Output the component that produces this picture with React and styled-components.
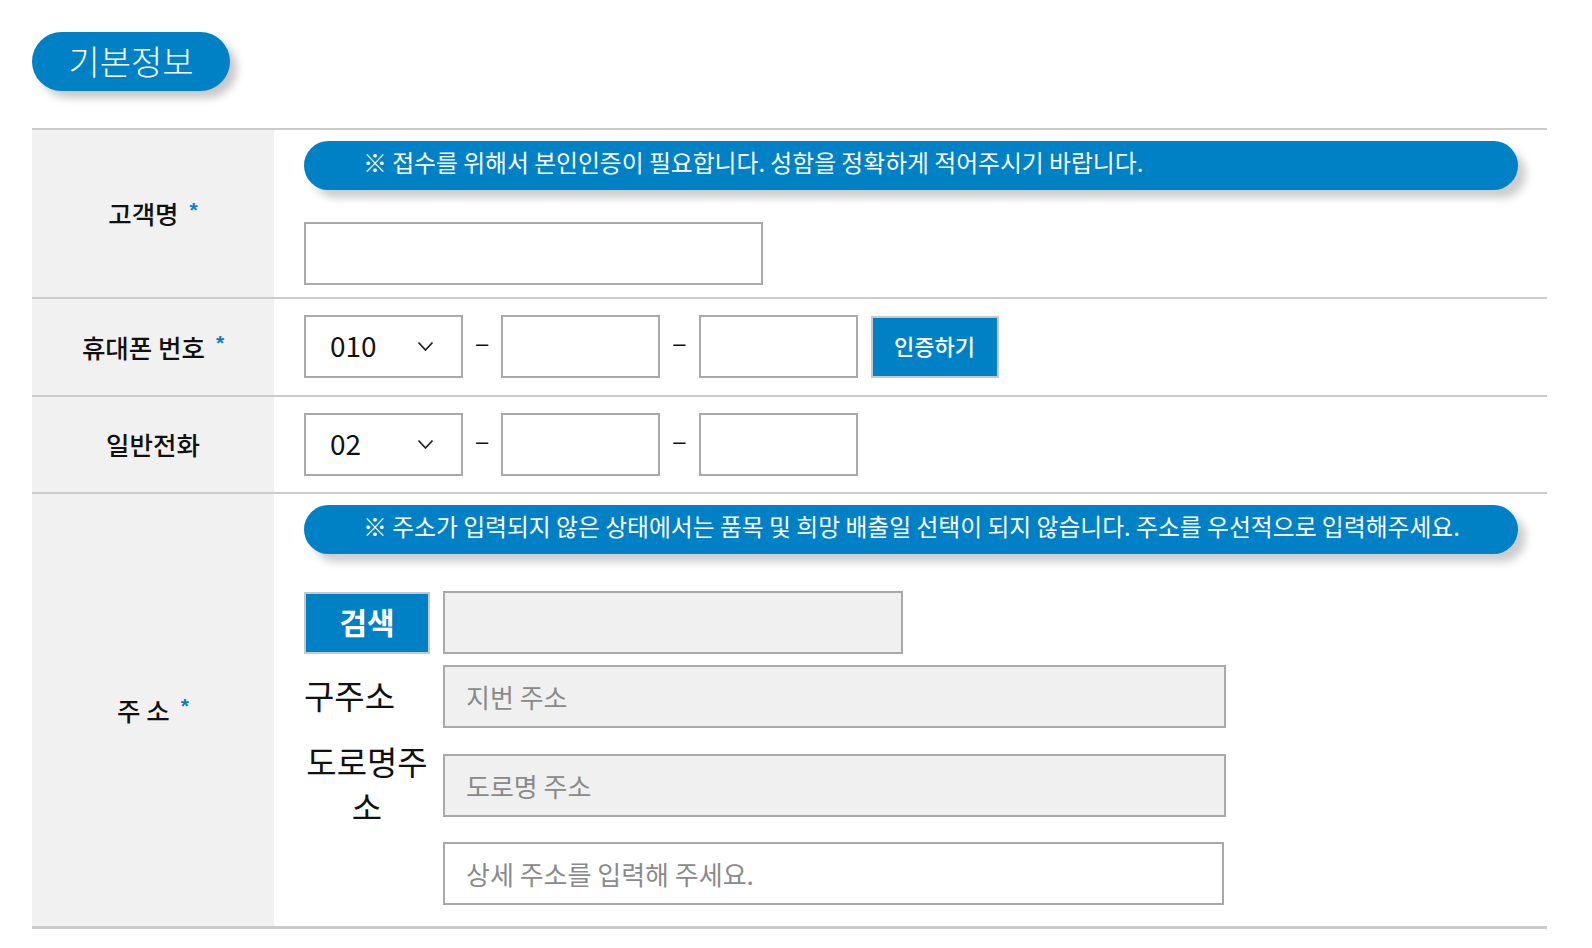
import React from "react";
import styled, { createGlobalStyle } from "styled-components";

const GlobalStyle = createGlobalStyle`
  body {
    margin: 0;
    background: #fff;
    font-family: "Noto Sans CJK KR", "Noto Sans", sans-serif;
    color: #111;
  }
  * { box-sizing: border-box; }
`;

const BLUE = "#0081c6";

const StyledPage = styled.div`
  padding: 32px 0 0 32px;
`;

const StyledTitle = styled.div`
  display: inline-flex;
  align-items: center;
  justify-content: center;
  width: 198px;
  height: 59px;
  border-radius: 30px;
  background-color: ${BLUE};
  color: #fff;
  font-size: 34px;
  font-weight: 300;
  padding-bottom: 3px;
  box-shadow: 7px 7px 8px rgba(0, 0, 0, 0.22);
`;

const StyledTable = styled.div`
  width: 1515px;
  margin-top: 37px;
  border-top: 2px solid #cccccc;
  border-bottom: 3px solid #cccccc;
`;

const StyledRow = styled.div`
  display: grid;
  grid-template-columns: 242px 1fr;
  & + & {
    border-top: 2px solid #cccccc;
  }
`;

const StyledLabel = styled.div`
  display: flex;
  align-items: center;
  justify-content: center;
  background-color: #f1f1f1;
  font-size: 25.5px;
  font-weight: 500;
  color: #111;
  padding-bottom: 2px;
`;

const StyledStar = styled.span`
  color: ${BLUE};
  font-family: "Liberation Sans", sans-serif;
  font-size: 21px;
  font-weight: 700;
  margin-left: 11px;
  position: relative;
  top: -3px;
`;

const StyledCell = styled.div`
  padding: ${(p) => p.$pad || "11px 0 12px 30px"};
  display: flex;
  flex-direction: column;
  justify-content: center;
`;

const StyledNotice = styled.div`
  width: 1214px;
  height: 49px;
  border-radius: 25px;
  background-color: ${BLUE};
  color: #fff;
  font-size: 23.8px;
  line-height: 42px;
  padding-left: 59px;
  white-space: nowrap;
  box-shadow: 8px 8px 9px rgba(0, 0, 0, 0.2);
`;

const StyledInput = styled.input`
  display: block;
  width: ${(p) => p.$w}px;
  height: 63px;
  border: 2px solid #a9a9a9;
  background-color: ${(p) => (p.$gray ? "#f0f0f0" : "#fff")};
  margin-top: ${(p) => p.$mt || 0}px;
  padding: 0 0 0 21px;
  font-family: "Noto Sans CJK KR", "Noto Sans", sans-serif;
  font-size: 26px;
  color: #333;
  outline: none;
  &::placeholder {
    color: #8a8a8a;
  }
`;

const StyledLine = styled.div`
  display: flex;
  align-items: center;
  gap: 13px;
`;

const StyledSelectBox = styled.div`
  position: relative;
  width: 159px;
  height: 63px;
`;

const StyledSelect = styled.select`
  appearance: none;
  width: 100%;
  height: 100%;
  border: 2px solid #a9a9a9;
  border-radius: 0;
  background: #fff;
  padding: 0 0 4px 24px;
  font-family: "Noto Sans CJK KR", "Noto Sans", sans-serif;
  font-size: 28px;
  color: #111;
  outline: none;
`;

const StyledChevron = styled.svg`
  position: absolute;
  right: 29px;
  top: 26px;
  pointer-events: none;
`;

const StyledDash = styled.span`
  font-family: "Liberation Sans", sans-serif;
  font-size: 22px;
  color: #111;
  padding-bottom: 6px;
`;

const StyledButton = styled.button`
  width: ${(p) => p.$w || 128}px;
  height: 62px;
  border: 2px solid #c8c8c8;
  background-color: ${BLUE};
  color: #fff;
  font-family: "Noto Sans CJK KR", "Noto Sans", sans-serif;
  font-size: ${(p) => p.$size || 22}px;
  font-weight: ${(p) => p.$weight || 500};
  padding: 0 0 3px;
  cursor: pointer;
`;

const StyledAddress = styled.div`
  display: grid;
  grid-template-columns: 126px auto;
  column-gap: 13px;
  row-gap: 11px;
  justify-content: start;
  align-items: center;
  margin-top: 37px;
`;

const StyledAddrLabel = styled.div`
  font-size: 33px;
  line-height: 45px;
  color: #111;
  text-align: ${(p) => (p.$center ? "center" : "left")};
  white-space: ${(p) => (p.$center ? "normal" : "nowrap")};
  padding-bottom: 2px;
`;

const Chevron = () => (
  <StyledChevron width="17" height="11" viewBox="0 0 17 11">
    <path d="M1.5 1.5 L8.5 9 L15.5 1.5" fill="none" stroke="#222" strokeWidth="1.8" />
  </StyledChevron>
);

const PhoneSelect = ({ value, options }) => (
  <StyledSelectBox>
    <StyledSelect defaultValue={value}>
      {options.map((o) => (
        <option key={o}>{o}</option>
      ))}
    </StyledSelect>
    <Chevron />
  </StyledSelectBox>
);

const App = () => {
  return (
    <StyledPage>
      <GlobalStyle />
      <StyledTitle>기본정보</StyledTitle>
      <StyledTable>
        <StyledRow>
          <StyledLabel>
            고객명<StyledStar>*</StyledStar>
          </StyledLabel>
          <StyledCell>
            <StyledNotice>※ 접수를 위해서 본인인증이 필요합니다. 성함을 정확하게 적어주시기 바랍니다.</StyledNotice>
            <StyledInput $w={459} $mt={32} />
          </StyledCell>
        </StyledRow>
        <StyledRow>
          <StyledLabel>
            휴대폰 번호<StyledStar>*</StyledStar>
          </StyledLabel>
          <StyledCell $pad="16px 0 17px 30px">
            <StyledLine>
              <PhoneSelect value="010" options={["010", "011", "016", "017", "018", "019"]} />
              <StyledDash>–</StyledDash>
              <StyledInput $w={159} />
              <StyledDash>–</StyledDash>
              <StyledInput $w={159} />
              <StyledButton>인증하기</StyledButton>
            </StyledLine>
          </StyledCell>
        </StyledRow>
        <StyledRow>
          <StyledLabel>일반전화</StyledLabel>
          <StyledCell $pad="16px 0 16px 30px">
            <StyledLine>
              <PhoneSelect value="02" options={["02", "031", "032", "033", "041", "042", "051"]} />
              <StyledDash>–</StyledDash>
              <StyledInput $w={159} />
              <StyledDash>–</StyledDash>
              <StyledInput $w={159} />
            </StyledLine>
          </StyledCell>
        </StyledRow>
        <StyledRow>
          <StyledLabel>
            주 소<StyledStar>*</StyledStar>
          </StyledLabel>
          <StyledCell $pad="11px 0 21px 30px">
            <StyledNotice>
              ※ 주소가 입력되지 않은 상태에서는 품목 및 희망 배출일 선택이 되지 않습니다. 주소를 우선적으로 입력해주세요.
            </StyledNotice>
            <StyledAddress>
              <StyledButton $w={126} $size={30} $weight={700}>
                검색
              </StyledButton>
              <StyledInput $w={460} $gray readOnly />
              <StyledAddrLabel>구주소</StyledAddrLabel>
              <StyledInput $w={783} $gray placeholder="지번 주소" readOnly />
              <StyledAddrLabel $center>도로명주소</StyledAddrLabel>
              <StyledInput $w={783} $gray placeholder="도로명 주소" readOnly />
              <span />
              <StyledInput $w={781} placeholder="상세 주소를 입력해 주세요." />
            </StyledAddress>
          </StyledCell>
        </StyledRow>
      </StyledTable>
    </StyledPage>
  );
};

export default App;
